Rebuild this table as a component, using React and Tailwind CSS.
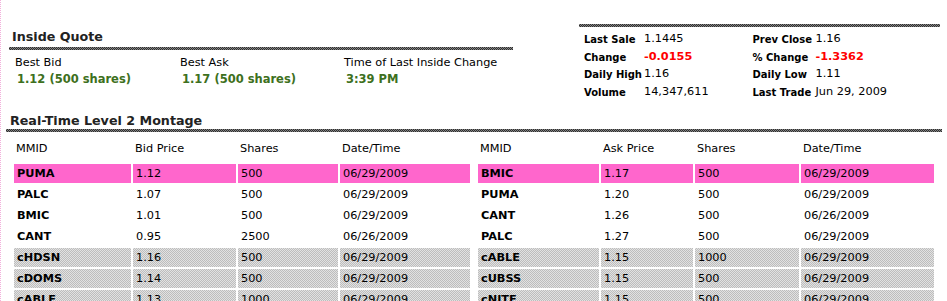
import React from 'react'

// Level 2 quote page: inside quote, summary box and two montage tables
const BAR = "h-[3px] bg-[image:repeating-conic-gradient(#2e2e2e_0_25%,#858585_0_50%)] bg-size-[2px_2px]"
const GRAY = "bg-[image:repeating-conic-gradient(#bdbdbd_0_25%,#e2e2e2_0_50%)] bg-size-[2px_2px]"

const bids = [
  ['PUMA', '1.12', '500', '06/29/2009', 'pink'],
  ['PALC', '1.07', '500', '06/29/2009', 'white'],
  ['BMIC', '1.01', '500', '06/29/2009', 'white'],
  ['CANT', '0.95', '2500', '06/26/2009', 'white'],
  ['cHDSN', '1.16', '500', '06/29/2009', 'gray'],
  ['cDOMS', '1.14', '500', '06/29/2009', 'gray'],
  ['cABLE', '1.13', '1000', '06/29/2009', 'gray'],
]

const asks = [
  ['BMIC', '1.17', '500', '06/29/2009', 'pink'],
  ['PUMA', '1.20', '500', '06/29/2009', 'white'],
  ['CANT', '1.26', '500', '06/26/2009', 'white'],
  ['PALC', '1.27', '500', '06/29/2009', 'white'],
  ['cABLE', '1.15', '1000', '06/29/2009', 'gray'],
  ['cUBSS', '1.15', '500', '06/29/2009', 'gray'],
  ['cNITE', '1.15', '500', '06/29/2009', 'gray'],
]

function cellBg(kind) {
  if (kind === 'pink') return 'bg-[#ff66cc]'
  if (kind === 'gray') return GRAY
  return 'bg-white'
}

function Montage({ cols, priceLabel, rows }) {
  return (
    <table className="w-[460px] table-fixed border-separate border-spacing-[2px] text-[11.3px] leading-[13px]">
      <colgroup>
        {cols.map((w, i) => (
          <col key={i} style={{ width: w }} />
        ))}
      </colgroup>
      <thead>
        <tr>
          {['MMID', priceLabel, 'Shares', 'Date/Time'].map((h) => (
            <th key={h} className="h-[27px] px-[2px] text-left font-normal align-middle">
              {h}
            </th>
          ))}
        </tr>
      </thead>
      <tbody>
        {rows.map(([id, price, shares, date, kind]) => (
          <tr key={id}>
            <td className={`h-[19px] px-[3px] font-bold align-middle ${cellBg(kind)}`}>{id}</td>
            <td className={`h-[19px] px-[3px] align-middle ${cellBg(kind)}`}>{price}</td>
            <td className={`h-[19px] px-[3px] align-middle ${cellBg(kind)}`}>{shares}</td>
            <td className={`h-[19px] px-[3px] align-middle ${cellBg(kind)}`}>{date}</td>
          </tr>
        ))}
      </tbody>
    </table>
  )
}

function Stat({ label, value, red }) {
  return (
    <>
      <div className="text-[10px] font-bold">{label}</div>
      <div className={red ? 'text-[11.3px] font-bold text-[#ff0000]' : 'text-[11.3px]'}>{value}</div>
    </>
  )
}

export default function App() {
  return (
    <div className="w-[947px] min-h-[301px] bg-white text-black border-l border-dotted border-[#f2b0dc] font-['DejaVu_Sans',Verdana,sans-serif]">
      <div className="flex h-[129px]">
        <div className="ml-[5px] w-[507px] flex flex-col">
          <div className="ml-[3px] pt-[29px]">
            <h2 className="pl-[3px] h-[15px] text-[12.7px] leading-[15px] font-bold text-[#222]">Inside Quote</h2>
            <div className={`mt-[3px] ${BAR}`} />
            <div className="pl-[6px] mt-[6px] grid grid-cols-[165px_164px_1fr] text-[11.3px] leading-[13px]">
              <div>Best Bid</div>
              <div>Best Ask</div>
              <div>Time of Last Inside Change</div>
            </div>
            <div className="pl-[8px] mt-[4px] grid grid-cols-[165px_164px_1fr] text-[11.5px] leading-[13px] font-bold text-[#3d7020]">
              <div>1.12 (500 shares)</div>
              <div>1.17 (500 shares)</div>
              <div>3:39 PM</div>
            </div>
          </div>
          <h2 className="mt-auto mb-[1px] pl-[4px] h-[15px] text-[12.7px] leading-[15px] font-bold text-[#222]">
            Real-Time Level 2 Montage
          </h2>
        </div>

        <div className="ml-auto mr-[7px] mt-[24px] w-[361px]">
          <div className={BAR} />
          <div className="pl-[5px] pt-[4px] grid grid-cols-[60px_108.5px_63px_1fr] auto-rows-[17.5px] items-center">
            <Stat label="Last Sale" value="1.1445" />
            <Stat label="Prev Close" value="1.16" />
            <Stat label="Change" value="-0.0155" red />
            <Stat label="% Change" value="-1.3362" red />
            <Stat label="Daily High" value="1.16" />
            <Stat label="Daily Low" value="1.11" />
            <Stat label="Volume" value="14,347,611" />
            <Stat label="Last Trade" value="Jun 29, 2009" />
          </div>
        </div>
      </div>

      <div className={`ml-[5px] w-[936px] ${BAR}`} />

      <div className="ml-[11px] mt-[1px] flex gap-[4px]">
        <Montage cols={[117, 103, 100, 130]} priceLabel="Bid Price" rows={bids} />
        <Montage cols={[121, 92, 104, 133]} priceLabel="Ask Price" rows={asks} />
      </div>
    </div>
  )
}
